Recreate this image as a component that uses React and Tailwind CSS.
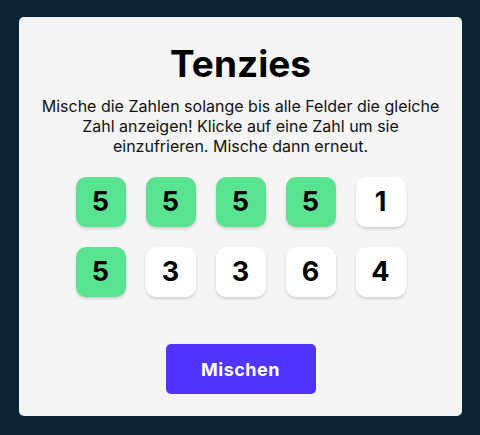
import React from 'react'

const dice = [
    { value: 5, held: true },
    { value: 5, held: true },
    { value: 5, held: true },
    { value: 5, held: true },
    { value: 1, held: false },
    { value: 5, held: true },
    { value: 3, held: false },
    { value: 3, held: false },
    { value: 6, held: false },
    { value: 4, held: false },
]

function Die({ value, held }) {
    return (
        <div
            className={`w-[50px] h-[50px] rounded-[10px] flex items-center justify-center text-[27px] font-bold text-black shadow-[0_2px_3px_rgba(0,0,0,0.15)] ${held ? 'bg-[#59e391]' : 'bg-white'}`}
        >
            {value}
        </div>
    )
}

export default function App() {
    return (
        <div className="w-[480px] h-[435px] bg-[#0b2434] pt-[17px] pl-[19px] font-['Inter',sans-serif]">
            <div className="w-[443px] h-[399px] bg-[#f5f5f5] rounded-[5px] flex flex-col items-center">
                <h1 className="mt-[24px] text-[37px] leading-[45px] font-bold text-black">Tenzies</h1>
                <p className="mt-[10px] px-[22px] text-center text-[16px] leading-[20px] text-[#111]">
                    Mische die Zahlen solange bis alle Felder die gleiche Zahl anzeigen! Klicke auf eine Zahl um sie einzufrieren. Mische dann erneut.
                </p>
                <div className="mt-[21px] grid grid-cols-5 gap-[20px]">
                    {dice.map((d, i) => (
                        <Die key={i} value={d.value} held={d.held} />
                    ))}
                </div>
                <button className="mt-[47px] w-[150px] h-[50px] rounded-[5px] bg-[#5035ff] text-white text-[18px] font-bold tracking-[0.5px]">
                    Mischen
                </button>
            </div>
        </div>
    )
}
